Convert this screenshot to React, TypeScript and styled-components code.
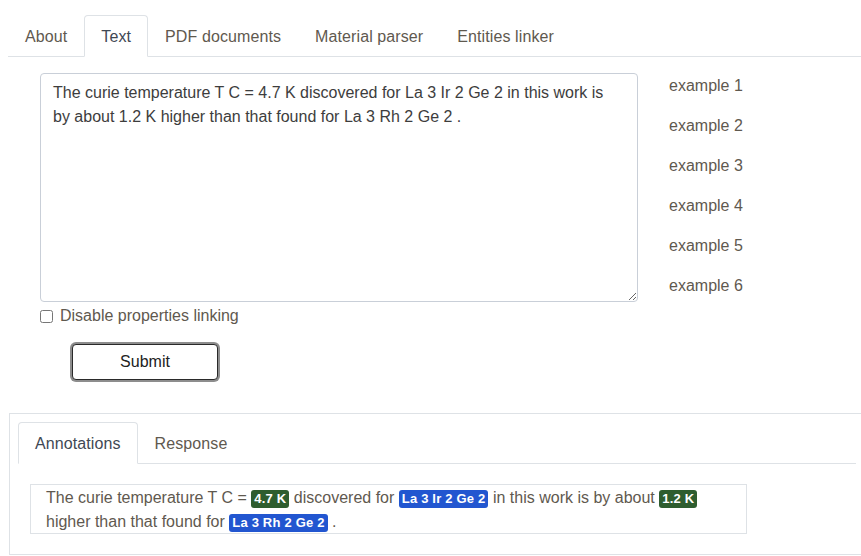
import React from "react";
import styled, { createGlobalStyle } from "styled-components";

const GlobalStyle = createGlobalStyle`
  html, body {
    margin: 0;
    padding: 0;
    background: #ffffff;
    overflow: hidden;
  }
  body {
    font-family: "Liberation Sans", Arial, Helvetica, sans-serif;
    font-size: 16px;
    line-height: 24px;
    color: #5f594f;
  }
`;

const Page = styled.div`
  padding: 15px 0 0 8px;
`;

const TabBar = styled.div`
  display: flex;
  border-bottom: 1px solid #dee2e6;
`;

const Tab = styled.div<{ $active?: boolean }>`
  padding: 9px 16px 7px;
  line-height: 24px;
  font-size: 16px;
  letter-spacing: 0.1px;
  border: 1px solid transparent;
  border-radius: 4px 4px 0 0;
  margin-bottom: -1px;
  color: ${(p) => (p.$active ? "#3f4854" : "#5f594f")};
  background: ${(p) => (p.$active ? "#ffffff" : "transparent")};
  border-color: ${(p) =>
    p.$active ? "#dee2e6 #dee2e6 #ffffff" : "transparent"};
`;

const MainRow = styled.div`
  display: flex;
  gap: 31px;
  margin-top: 16px;
  padding-left: 32px;
`;

const FormColumn = styled.div`
  display: flex;
  flex-direction: column;
  width: 598px;
`;

const TextArea = styled.textarea`
  box-sizing: border-box;
  width: 598px;
  height: 229px;
  margin: 0;
  padding: 7px 28px 5px 12px;
  border: 1px solid #c9cfd8;
  border-radius: 4px;
  font-family: "Liberation Sans", Arial, Helvetica, sans-serif;
  font-size: 16px;
  line-height: 24px;
  color: #3d3d3d;
  resize: both;
  outline: none;
`;

const CheckRow = styled.label`
  display: flex;
  align-items: center;
  height: 24px;
  margin-top: 2px;
  font-size: 16px;
  color: #5f594f;
`;

const CheckBox = styled.input`
  width: 13px;
  height: 13px;
  margin: 0 7px 0 0;
`;

const SubmitButton = styled.button`
  box-sizing: border-box;
  width: 146px;
  height: 36px;
  margin: 16px 0 0 32px;
  padding-top: 1px;
  background: #ffffff;
  border: 1px solid #2a2a2a;
  border-radius: 4px;
  box-shadow: 0 0 0 2px #8d8d8d;
  font-family: "Liberation Sans", Arial, Helvetica, sans-serif;
  font-size: 16px;
  color: #222222;
  cursor: pointer;
`;

const Examples = styled.div`
  display: flex;
  flex-direction: column;
  gap: 16px;
  padding-top: 1px;
`;

const ExampleLink = styled.div`
  font-size: 16px;
  line-height: 24px;
  color: #5f594f;
  cursor: pointer;
`;

const Card = styled.div`
  margin: 33px -4px 0 1px;
  border: 1px solid #dee2e6;
  padding: 8px 8px 20px 8px;
`;

const ResultBox = styled.div`
  width: 717px;
  box-sizing: border-box;
  margin: 20px 0 0 12px;
  padding: 1px 15px 0;
  height: 50px;
  border: 1px solid #dee2e6;
  font-size: 16px;
  line-height: 24px;
  color: #5f594f;
`;

const Badge = styled.span<{ $kind: "value" | "material" }>`
  display: inline-block;
  padding: 0 3px;
  border-radius: 3px;
  font-size: 13px;
  font-weight: bold;
  letter-spacing: 0.2px;
  line-height: 18px;
  color: #ffffff;
  background: ${(p) => (p.$kind === "value" ? "#2e5d2f" : "#2256d0")};
`;

const tabs = ["About", "Text", "PDF documents", "Material parser", "Entities linker"];
const examples = [1, 2, 3, 4, 5, 6];

export default function App() {
  return (
    <>
      <GlobalStyle />
      <Page>
        <TabBar>
          {tabs.map((t) => (
            <Tab key={t} $active={t === "Text"}>
              {t}
            </Tab>
          ))}
        </TabBar>
        <MainRow>
          <FormColumn>
            <TextArea
              defaultValue="The curie temperature T C = 4.7 K discovered for La 3 Ir 2 Ge 2 in this work is by about 1.2 K higher than that found for La 3 Rh 2 Ge 2 ."
            />
            <CheckRow>
              <CheckBox type="checkbox" />
              Disable properties linking
            </CheckRow>
            <div>
              <SubmitButton>Submit</SubmitButton>
            </div>
          </FormColumn>
          <Examples>
            {examples.map((n) => (
              <ExampleLink key={n}>example {n}</ExampleLink>
            ))}
          </Examples>
        </MainRow>
        <Card>
          <TabBar>
            <Tab $active>Annotations</Tab>
            <Tab>Response</Tab>
          </TabBar>
          <ResultBox>
            The curie temperature T C = <Badge $kind="value">4.7 K</Badge>{" "}
            discovered for <Badge $kind="material">La 3 Ir 2 Ge 2</Badge> in this
            work is by about <Badge $kind="value">1.2 K</Badge> higher than that
            found for <Badge $kind="material">La 3 Rh 2 Ge 2</Badge> .
          </ResultBox>
        </Card>
      </Page>
    </>
  );
}
